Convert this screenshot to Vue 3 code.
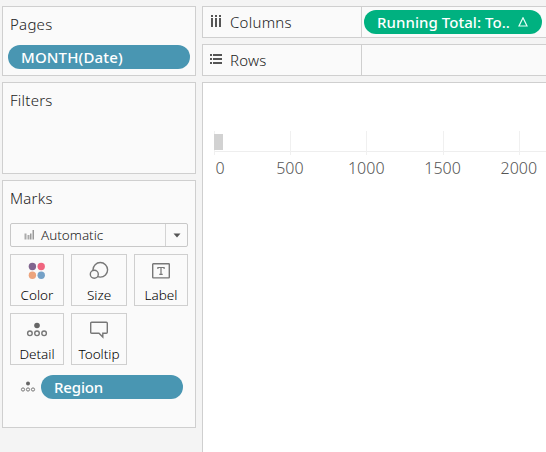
<script setup>
const marks = [
  { id: 'color', label: 'Color' },
  { id: 'size', label: 'Size' },
  { id: 'label', label: 'Label' },
  { id: 'detail', label: 'Detail' },
  { id: 'tooltip', label: 'Tooltip' },
]
const ticks = [0, 500, 1000, 1500, 2000]
</script>

<template>
  <div class="workspace">
    <aside class="cards">
      <section class="card pages">
        <h2>Pages</h2>
        <div class="pill blue month"><span>MONTH(Date)</span></div>
      </section>
      <section class="card filters"><h2>Filters</h2></section>
      <section class="card marks">
        <h2>Marks</h2>
        <div class="select">
          <svg class="bars" width="12" height="10" viewBox="0 0 12 10">
            <path d="M.5 3.500h2v6h-2zM3.500 5h2v4.500h-2z" fill="#aaa" />
            <path d="M6 3.500h1.500v6H6zM8.500 0H10v9.500H8.500z" fill="#999" />
          </svg>
          <span class="value">Automatic</span>
          <span class="arrow"><svg width="8" height="5" viewBox="0 0 8 5"><path d="M.5.5h7L4 4.500z" fill="#555" /></svg></span>
        </div>
        <div class="grid">
          <button v-for="m in marks" :key="m.id" :class="['mark', m.id]">
            <svg width="24" height="24" viewBox="0 0 24 24" fill="none" stroke="#777" stroke-width="1.400">
              <g v-if="m.id === 'color'" stroke="none">
                <circle cx="7.400" cy="7.500" r="3.700" fill="#81658f" />
                <circle cx="16.200" cy="7.500" r="3.700" fill="#f0657f" />
                <circle cx="7.400" cy="16.300" r="3.700" fill="#eca47d" />
                <circle cx="16.200" cy="16.300" r="3.700" fill="#75a1c7" />
              </g>
              <g v-else-if="m.id === 'size'">
                <circle cx="13.300" cy="10.800" r="7.300" />
                <circle cx="7.300" cy="15.300" r="4" fill="#fafafa" />
              </g>
              <g v-else-if="m.id === 'label'">
                <rect x="3.700" y="4.700" width="16.600" height="14.200" rx=".6" />
                <path d="M8.900 10V8.500h6.200V10M12 8.500v6.800M10.300 15.300h3.400" stroke-width="1.200" />
              </g>
              <g v-else-if="m.id === 'detail'">
                <circle cx="12" cy="7.500" r="2.800" fill="#666" stroke="none" />
                <circle cx="4.900" cy="15.300" r="2.300" /><circle cx="12" cy="15.300" r="2.300" /><circle cx="19.100" cy="15.300" r="2.300" />
              </g>
              <path v-else d="M4.700 4.200h14.600q1 0 1 1v9q0 1-1 1h-3.500v3.800l-3.800-3.800H4.700q-1 0-1-1v-9q0-1 1-1z" />
            </svg>
            <span>{{ m.label }}</span>
          </button>
        </div>
        <div class="encoding">
          <svg width="16" height="12" viewBox="0 0 16 12" fill="none" stroke="#777">
            <circle cx="8" cy="2.500" r="2" fill="#666" stroke="none" />
            <circle cx="3" cy="8.500" r="1.600" /><circle cx="8" cy="8.500" r="1.600" /><circle cx="13" cy="8.500" r="1.600" />
          </svg>
          <div class="pill blue region"><span>Region</span></div>
        </div>
      </section>
    </aside>
    <main class="main">
      <div class="shelf">
        <div class="name">
          <svg width="12" height="12" viewBox="0 0 12 12" fill="#555">
            <path d="M1 0h2v2H1zM5 0h2v2H5zM9 0h2v2H9zM1 3h2v9H1zM5 3h2v9H5zM9 3h2v9H9z" />
          </svg>
          <span>Columns</span>
        </div>
        <div class="drop">
          <div class="pill green">
            <span>Running Total: To..</span>
            <svg width="10" height="10" viewBox="0 0 10 10"><path d="M5 .8L9 9H1z" fill="none" stroke="#e4fff5" stroke-width="1.200" /></svg>
          </div>
        </div>
      </div>
      <div class="shelf">
        <div class="name">
          <svg width="12" height="12" viewBox="0 0 12 12" fill="#555">
            <path d="M0 1h2v2H0zM3 1h9v2H3zM0 5h2v2H0zM3 5h9v2H3zM0 9h2v2H0zM3 9h9v2H3z" />
          </svg>
          <span class="rows">Rows</span>
        </div>
        <div class="drop"></div>
      </div>
      <div class="view">
        <div class="plot">
          <div class="bar"></div>
          <i v-for="t in ticks" :key="t" class="rule"></i>
        </div>
        <div class="axis"><span v-for="t in ticks" :key="t"><b>{{ t }}</b></span></div>
      </div>
    </main>
  </div>
</template>

<style>
body { background: #f4f4f4; overflow: hidden; }
</style>

<style scoped>
* { box-sizing: border-box; }
.workspace { display: flex; gap: 6px; width: 546px; height: 452px; padding: 6px 0 0 2px; overflow: hidden; background: #f4f4f4; font-family: "Noto Sans", sans-serif; font-weight: 300; color: #222; }
.cards { width: 194px; flex: none; display: flex; flex-direction: column; gap: 6px; }
.card { border: 1px solid #cfcfcf; background: #fafafa; }
h2 { margin: 0; padding: 7px 0 0 7px; font-size: 15px; font-weight: 300; letter-spacing: .25px; line-height: 20px; white-space: nowrap; }
.pages { height: 70px; }
.filters { height: 92px; }
.marks { height: 248px; padding-left: 7px; }
.marks h2 { padding-left: 0; }
.pill { display: flex; align-items: center; height: 24px; border-radius: 12px; color: #fff; font-size: 15px; font-weight: 500; line-height: 24px; white-space: nowrap; padding-left: 13px; }
.blue { background: #4996b2; }
.green { background: #00b180; width: 178px; justify-content: space-between; padding-right: 14px; letter-spacing: .05px; }
.month { width: 182px; margin: 11px 0 0 5px; letter-spacing: .15px; }
.region { width: 142px; letter-spacing: -.15px; }
.select { display: flex; align-items: center; width: 178px; height: 24px; margin-top: 15px; border: 1px solid #c8c8c8; border-radius: 2px; font-size: 13.500px; }
.bars { margin: 0 5px 0 13px; }
.arrow { width: 22px; height: 22px; margin-left: auto; border-left: 1px solid #d4d4d4; display: flex; align-items: center; justify-content: center; }
.grid { display: grid; grid-template-columns: 54px 56px 54px; gap: 7px; margin-top: 7px; }
.mark { height: 52px; padding: 4px 0 0; border: 1px solid #cfcfcf; background: #fafafa; display: flex; flex-direction: column; align-items: center; font: 300 13.500px/18px "Noto Sans", sans-serif; color: #000; }
.mark svg { flex: none; }
.mark span { margin-top: 3px; }
.encoding { display: flex; align-items: center; gap: 5px; padding-left: 10px; margin-top: 10px; }
.main { width: 344px; flex: none; display: flex; flex-direction: column; gap: 6px; }
.shelf { display: flex; height: 32px; border: 1px solid #cfcfcf; border-right: 0; background: #fafafa; }
.name { width: 159px; border-right: 1px solid #cfcfcf; display: flex; align-items: center; padding-left: 7px; gap: 8px; font-size: 15px; letter-spacing: .25px; line-height: 20px; }
.name svg { margin-top: -3px; }
.drop { padding: 3px 0 0 2px; }
.view { flex: 1; border: 1px solid #cfcfcf; border-width: 1px 0 0 1px; background: #fff; padding: 48px 0 0 11px; }
.plot { height: 21px; border-bottom: 1px solid #eee; display: grid; grid-template-columns: 76px 76px 77px 76px 28px; position: relative; }
.rule { height: 24px; border-left: 1px solid #f0f0f0; }
.bar { position: absolute; left: 0; top: 3px; width: 9px; height: 16px; background: #d2d2d2; }
.axis { display: flex; margin-top: 6px; font: 300 16px/20px "Noto Sans", sans-serif; color: #555; }
.axis span { flex: none; width: 76.300px; display: flex; justify-content: center; margin-left: -38.500px; margin-right: 38.500px; }
.axis b { font-weight: 300; }
.axis span:first-child { padding-left: 13px; }
</style>
